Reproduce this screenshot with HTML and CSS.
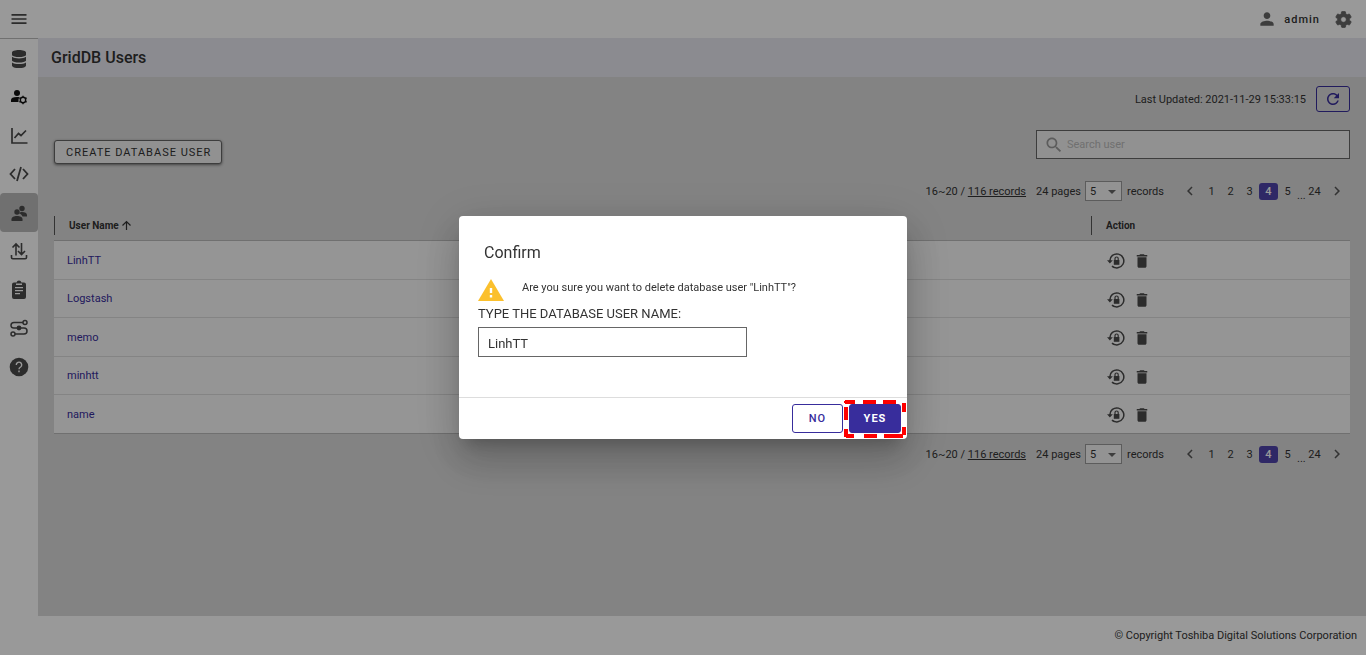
FILE: index.html
```html
<!DOCTYPE html>
<html lang="en">
<head>
    <meta charset="UTF-8">
    <meta name="viewport" content="width=device-width, initial-scale=1.0">
    <title>GridDB Users</title>
    <link rel="stylesheet" href="styles.css">
</head>
<body>
    <!-- Shared icons -->
    <svg class="sprite" aria-hidden="true">
        <symbol id="icon-reset" viewBox="0 0 18 18">
            <path d="M2.8 9A7 7 0 1 1 5 14M5.2 14.2A7 7 0 0 0 7.4 15.6" fill="none" stroke="currentColor" stroke-width="1.5"/>
            <path d="M0 8.2h5.8L2.9 11.4z"/>
            <path d="M6.8 8h5.6v4.8H6.8z"/>
            <path d="M8 8V6.6a1.6 1.6 0 0 1 3.2 0V8" fill="none" stroke="currentColor" stroke-width="1.2"/>
        </symbol>
        <symbol id="icon-trash" viewBox="0 0 24 24">
            <path d="M6 19c0 1.100.9 2 2 2h8c1.100 0 2-.9 2-2V7H6v12zM19 4h-3.500l-1-1h-5l-1 1H5v2h14V4z"/>
        </symbol>
        <symbol id="icon-left" viewBox="0 0 24 24"><path d="M15.410 7.410 14 6l-6 6 6 6 1.410-1.410L10.830 12z"/></symbol>
        <symbol id="icon-right" viewBox="0 0 24 24"><path d="M10 6 8.590 7.410 13.170 12l-4.580 4.590L10 18l6-6z"/></symbol>
    </svg>

    <div class="app">
        <header class="topbar">
            <button class="icon-btn menu-btn" aria-label="Menu">
                <svg width="20" height="20" viewBox="0 0 24 24"><path d="M3 18h18v-2H3v2zm0-5h18v-2H3v2zm0-7v2h18V6H3z"/></svg>
            </button>
            <div class="account">
                <svg width="20" height="20" viewBox="0 0 24 24"><path d="M12 12c2.210 0 4-1.790 4-4s-1.790-4-4-4-4 1.790-4 4 1.790 4 4 4zm0 2c-2.670 0-8 1.340-8 4v2h16v-2c0-2.660-5.330-4-8-4z"/></svg>
                <span class="account-name">admin</span>
                <button class="icon-btn" aria-label="Settings">
                    <svg width="19" height="19" viewBox="0 0 24 24"><path d="M19.430 12.980c.04-.32.07-.64.07-.98s-.03-.66-.07-.98l2.110-1.650c.19-.15.24-.42.12-.64l-2-3.460c-.12-.22-.39-.3-.61-.22l-2.490 1c-.52-.4-1.080-.73-1.690-.98l-.38-2.650C14.460 2.180 14.250 2 14 2h-4c-.25 0-.46.18-.49.42l-.38 2.650c-.61.25-1.170.59-1.690.98l-2.490-1c-.23-.09-.49 0-.61.22l-2 3.460c-.13.22-.07.49.12.64l2.110 1.650c-.04.32-.07.65-.07.98s.03.66.07.98l-2.110 1.650c-.19.15-.24.42-.12.64l2 3.460c.12.22.39.3.61.22l2.490-1c.52.4 1.080.73 1.690.98l.38 2.650c.03.24.24.42.49.42h4c.25 0 .46-.18.49-.42l.38-2.650c.61-.25 1.170-.59 1.690-.98l2.490 1c.23.09.49 0 .61-.22l2-3.460c.12-.22.07-.49-.12-.64l-2.110-1.650zM12 15.500c-1.930 0-3.500-1.570-3.500-3.500s1.570-3.500 3.500-3.500 3.500 1.570 3.500 3.500-1.570 3.500-3.500 3.500z" stroke="currentColor"/></svg>
                </button>
            </div>
        </header>

        <div class="body">
            <nav class="sidebar" aria-label="Main">
                <a href="#" aria-label="Databases">
                    <svg width="18" height="20" viewBox="0 0 18 20"><path d="M2 3.500C2 2 5 1 9 1s7 1 7 2.500v2.700C15 7.300 12.500 8 9 8S3 7.300 2 6.200zM2 7.800c1.500 1.100 4 1.600 7 1.600s5.500-.5 7-1.600v4c-1 1.100-3.500 1.800-7 1.800s-6-.7-7-1.800zM2 13.400C3.500 14.500 6 15 9 15s5.500-.5 7-1.600v3C16 18 13 19 9 19s-7-1-7-2.600z"/></svg>
                </a>
                <a href="#" class="strong" aria-label="User settings">
                    <svg width="18" height="18" viewBox="0 0 18 18"><circle cx="7" cy="5" r="3"/><path d="M1 14v-2c0-2 2-3 6-3 1 0 1.800.1 2.500.3A5 5 0 0 0 8.500 14z"/><circle cx="13" cy="12" r="2.700" fill="none" stroke="currentColor" stroke-width="1.400"/><path d="M13 7.800v8.400M9.400 9.900l7.200 4.200M9.400 14.100l7.200-4.200" fill="none" stroke="currentColor" stroke-width="1.300" stroke-dasharray="1.500 5.400"/></svg>
                </a>
                <a href="#" aria-label="Metrics">
                    <svg width="18" height="18" viewBox="0 0 18 18"><path d="M2 1v15h15.500M4.500 11l4-4.500 2.500 2L16 3.500" fill="none" stroke="currentColor" stroke-width="1.700"/></svg>
                </a>
                <a href="#" aria-label="Query">
                    <svg width="20" height="18" viewBox="0 0 20 18"><path d="M6 4 1.500 9 6 14M14 4l4.500 5-4.500 5M12 2 8 16" fill="none" stroke="currentColor" stroke-width="1.800"/></svg>
                </a>
                <a href="#" class="active" aria-label="GridDB Users" aria-current="page">
                    <svg width="18" height="18" viewBox="0 0 18 18"><circle cx="12" cy="4.500" r="2.700"/><path d="M9 9.200c1-1 2-1.200 3-1.200 3 0 5 1.200 5 3v1.500h-4.500C12 10.800 10.500 9.800 9 9.200z"/><circle cx="7" cy="8" r="2.700"/><path d="M1.500 17v-1.800C1.500 13 4 12 7 12s5.500 1 5.500 3.200V17z"/></svg>
                </a>
                <a href="#" aria-label="Import and export">
                    <svg width="18" height="18" viewBox="0 0 18 18"><path d="M1.500 13v2.500q0 1.300 1.300 1.300h12.400q1.300 0 1.300-1.300V13M6 13.500V2M2.500 5.500 6 2l3.500 3.500M11.500 1v11.500M8 9l3.500 3.500L15 9" fill="none" stroke="currentColor" stroke-width="1.600"/></svg>
                </a>
                <a href="#" aria-label="Logs">
                    <svg width="18" height="20" viewBox="0 0 18 20"><path fill-rule="evenodd" d="M4 2.500h2.500a2.600 2.600 0 0 1 5 0H14q2 0 2 2V17q0 2-2 2H4q-2 0-2-2V4.500q0-2 2-2zM5 7v1.300h8V7zm0 3v1.300h8V10zm0 3v1.300h5V13zM6 3.500V5h6V3.500z"/></svg>
                </a>
                <a href="#" aria-label="Jobs">
                    <svg width="18" height="18" viewBox="0 0 18 18"><g fill="none" stroke="currentColor" stroke-width="1.500"><circle cx="15" cy="3.500" r="2"/><circle cx="3" cy="15" r="2"/><path d="M13 3.500H4q-3 0-3 2.800T4 9h10q3 0 3 3t-3 3H5"/></g><circle cx="9" cy="9" r="2.400"/></svg>
                </a>
                <a href="#" aria-label="Help">
                    <svg width="20" height="20" viewBox="0 0 20 20"><circle cx="10" cy="10" r="9.300"/><path d="M7.300 8a2.700 2.700 0 1 1 4.300 2Q10 11 10 12.300M10 13.600v1.700" fill="none" stroke="#fff" stroke-width="1.400"/></svg>
                </a>
            </nav>

            <main class="main">
                <h1 class="page-title">GridDB Users</h1>

                <div class="content">
                    <div class="updated">
                        <span>Last Updated: 2021-11-29 15:33:15</span>
                        <button class="refresh" aria-label="Refresh">
                            <svg width="18" height="18" viewBox="0 0 24 24"><path d="M17.650 6.350C16.200 4.900 14.210 4 12 4c-4.420 0-7.990 3.580-7.990 8s3.570 8 7.990 8c3.730 0 6.840-2.550 7.730-6h-2.080c-.82 2.330-3.040 4-5.650 4-3.310 0-6-2.690-6-6s2.690-6 6-6c1.660 0 3.140.69 4.220 1.780L13 11h7V4l-2.350 2.350z"/></svg>
                        </button>
                    </div>

                    <div class="toolbar">
                        <button class="create">CREATE DATABASE USER</button>
                        <label class="search">
                            <svg width="20" height="20" viewBox="0 0 24 24"><path d="M15.500 14h-.79l-.28-.27C15.410 12.590 16 11.110 16 9.500 16 5.910 13.090 3 9.500 3S3 5.910 3 9.500 5.910 16 9.500 16c1.610 0 3.090-.59 4.230-1.570l.27.28v.79l5 4.990L20.490 19l-4.990-5zm-6 0C7.010 14 5 11.990 5 9.500S7.010 5 9.500 5 14 7.010 14 9.500 11.990 14 9.500 14z"/></svg>
                            <input type="text" placeholder="Search user" aria-label="Search user">
                        </label>
                    </div>

                    <div class="pager">
                        <span>16~20 / <u>116 records</u></span>
                        <span class="pages">24 pages</span>
                        <select aria-label="Records per page"><option>5</option></select>
                        <span>records</span>
                        <div class="page-list">
                            <button class="arrow" aria-label="Previous page"><svg width="18" height="18"><use href="#icon-left"/></svg></button>
                            <button>1</button>
                            <button>2</button>
                            <button>3</button>
                            <button class="current">4</button>
                            <button>5</button>
                            <span class="dots">...</span>
                            <button>24</button>
                            <button class="arrow" aria-label="Next page"><svg width="18" height="18"><use href="#icon-right"/></svg></button>
                        </div>
                    </div>

                    <table class="users">
                        <thead>
                            <tr>
                                <th><span class="th-label">User Name <svg width="11" height="11" viewBox="0 0 11 11"><path d="M5.500 10V1.500M1.500 5.500l4-4 4 4" fill="none" stroke="currentColor" stroke-width="1.200"/></svg></span></th>
                                <th class="action"><span class="th-label">Action</span></th>
                            </tr>
                        </thead>
                        <tbody>
                            <tr>
                                <td><a href="#">LinhTT</a></td>
                                <td><div class="actions"><button class="icon-btn" aria-label="Reset password"><svg width="18" height="18"><use href="#icon-reset"/></svg></button><button class="icon-btn" aria-label="Delete"><svg width="18" height="18"><use href="#icon-trash"/></svg></button></div></td>
                            </tr>
                            <tr>
                                <td><a href="#">Logstash</a></td>
                                <td><div class="actions"><button class="icon-btn" aria-label="Reset password"><svg width="18" height="18"><use href="#icon-reset"/></svg></button><button class="icon-btn" aria-label="Delete"><svg width="18" height="18"><use href="#icon-trash"/></svg></button></div></td>
                            </tr>
                            <tr>
                                <td><a href="#">memo</a></td>
                                <td><div class="actions"><button class="icon-btn" aria-label="Reset password"><svg width="18" height="18"><use href="#icon-reset"/></svg></button><button class="icon-btn" aria-label="Delete"><svg width="18" height="18"><use href="#icon-trash"/></svg></button></div></td>
                            </tr>
                            <tr>
                                <td><a href="#">minhtt</a></td>
                                <td><div class="actions"><button class="icon-btn" aria-label="Reset password"><svg width="18" height="18"><use href="#icon-reset"/></svg></button><button class="icon-btn" aria-label="Delete"><svg width="18" height="18"><use href="#icon-trash"/></svg></button></div></td>
                            </tr>
                            <tr>
                                <td><a href="#">name</a></td>
                                <td><div class="actions"><button class="icon-btn" aria-label="Reset password"><svg width="18" height="18"><use href="#icon-reset"/></svg></button><button class="icon-btn" aria-label="Delete"><svg width="18" height="18"><use href="#icon-trash"/></svg></button></div></td>
                            </tr>
                        </tbody>
                    </table>

                    <div class="pager">
                        <span>16~20 / <u>116 records</u></span>
                        <span class="pages">24 pages</span>
                        <select aria-label="Records per page"><option>5</option></select>
                        <span>records</span>
                        <div class="page-list">
                            <button class="arrow" aria-label="Previous page"><svg width="18" height="18"><use href="#icon-left"/></svg></button>
                            <button>1</button>
                            <button>2</button>
                            <button>3</button>
                            <button class="current">4</button>
                            <button>5</button>
                            <span class="dots">...</span>
                            <button>24</button>
                            <button class="arrow" aria-label="Next page"><svg width="18" height="18"><use href="#icon-right"/></svg></button>
                        </div>
                    </div>
                </div>
            </main>
        </div>

        <footer class="footer">© Copyright Toshiba Digital Solutions Corporation</footer>
    </div>

    <div class="overlay">
        <form class="dialog" role="dialog" aria-modal="true" aria-labelledby="dialogTitle">
            <div class="dialog-body">
                <h2 id="dialogTitle">Confirm</h2>
                <div class="message">
                    <svg width="26" height="22" viewBox="0 0 26 22"><path d="M13 0 26 22H0z" fill="#fbc02d"/><path d="M11.800 9h2.400v5h-2.400zM11.800 16h2.400v2.400h-2.400z" fill="#fff"/></svg>
                    <p>Are you sure you want to delete database user "LinhTT"?</p>
                </div>
                <label for="confirmName">TYPE THE DATABASE USER NAME:</label>
                <input type="text" id="confirmName" value="LinhTT">
            </div>
            <div class="dialog-actions">
                <button type="button" class="btn">NO</button>
                <div class="marked">
                    <button type="button" class="btn btn-primary">YES</button>
                    <svg class="marker" width="62" height="38" viewBox="0 0 62 38" aria-hidden="true"><path d="M1 2h10M19 2h13M39 2h13M60 3v9M60 27v8M59 36h-8M20 36h13M40 36h12M2 36h8M2 7v13M2 29v8M2 1v2" fill="none" stroke="#f00" stroke-width="4"/></svg>
                </div>
            </div>
        </form>
    </div>
</body>
</html>
```
FILE: styles.css
```css
:root {
    --primary-color: #382d9c;
    --text-color: #333;
    --icon-color: #4a4a4a;
    --page-bg: #dbdbdb;
    --font-family: Roboto, "Liberation Sans", sans-serif;
}

* {
    margin: 0;
    padding: 0;
    box-sizing: border-box;
}

body {
    font-family: var(--font-family);
    font-size: 11px;
    color: var(--text-color);
}

button, input, select {
    font-family: inherit;
    font-size: inherit;
    color: inherit;
}

button {
    cursor: pointer;
}

svg {
    display: block;
    flex: none;
    fill: currentColor;
}

a {
    color: var(--primary-color);
    text-decoration: none;
}

.sprite {
    display: none;
}

.app {
    min-height: 100vh;
    display: flex;
    flex-direction: column;
    background: #fff;
}

.icon-btn {
    background: none;
    border: none;
    color: var(--icon-color);
}

/* Top bar */
.topbar {
    height: 38px;
    display: flex;
    justify-content: space-between;
    align-items: center;
    padding: 0 13px 0 9px;
}

.account {
    display: flex;
    align-items: center;
    color: #666;
}

.account .icon-btn {
    color: #666;
}

.account-name {
    margin: 0 14px 0 7px;
    color: var(--text-color);
    font-weight: 500;
    letter-spacing: 1px;
}

/* Sidebar */
.body {
    flex: 1;
    display: flex;
}

.sidebar {
    width: 38px;
    border-top: 1px solid #bbb;
}

.sidebar a {
    height: 38px;
    display: flex;
    justify-content: center;
    align-items: center;
    color: var(--icon-color);
    border-radius: 4px;
}

.sidebar a:nth-child(odd) {
    height: 39px;
}

.sidebar .strong {
    color: #111;
}

.sidebar .active {
    background: #bbb;
}

/* Main */
.main {
    flex: 1;
    background: var(--page-bg);
}

.page-title {
    height: 39px;
    padding-left: 13px;
    background: #e8e8f0;
    font-size: 16px;
    font-weight: 500;
    line-height: 39px;
}

.content {
    padding: 9px 16px 0;
}

.updated {
    display: flex;
    justify-content: flex-end;
    align-items: center;
    gap: 10px;
}

.refresh {
    width: 34px;
    height: 26px;
    display: flex;
    justify-content: center;
    align-items: center;
    background: none;
    border: 1px solid var(--primary-color);
    border-radius: 3px;
    color: var(--primary-color);
}

.toolbar {
    display: flex;
    justify-content: space-between;
    align-items: flex-end;
    margin-top: 18px;
}

.create {
    height: 24px;
    padding: 0 10px 0 11px;
    margin-bottom: -5px;
    background: #f2f2f2;
    border: 1px solid #666;
    border-radius: 3px;
    box-shadow: 0 1px 3px rgba(0, 0, 0, 0.5);
    letter-spacing: 1px;
}

.search {
    width: 314px;
    height: 29px;
    display: flex;
    align-items: center;
    gap: 3px;
    padding-left: 7px;
    background: #f2f2f2;
    border: 1px solid #666;
    color: #999;
}

.search input {
    flex: 1;
    background: none;
    border: none;
    outline: none;
}

.search input::placeholder {
    color: #bbb;
}

/* Pagination */
.pager {
    height: 20px;
    display: flex;
    justify-content: flex-end;
    align-items: center;
    gap: 5px;
    margin-top: 22px;
    padding-right: 4px;
}

.pager .pages {
    margin-left: 5px;
}

.pager select {
    width: 37px;
    height: 20px;
    margin-left: -1px;
    padding-left: 4px;
    appearance: none;
    background: #f5f5f5 linear-gradient(#777, #777) no-repeat 0 0 / 0 0;
    background-image: conic-gradient(from -45deg at 50% 100%, #777 90deg, transparent 0);
    background-image: url("data:image/svg+xml,%3Csvg xmlns='http://www.w3.org/2000/svg' width='8' height='4'%3E%3Cpath d='M0 0h8L4 4z' fill='%23666'/%3E%3C/svg%3E");
    background-position: 22px 8px;
    background-size: 8px 4px;
    border: 1px solid #999;
}

.page-list {
    display: flex;
    align-items: center;
    margin-left: 8px;
}

.page-list button {
    width: 19px;
    height: 17px;
    background: none;
    border: none;
    border-radius: 3px;
}

.page-list .current {
    background: #4f44aa;
    color: #fff;
    font-weight: 500;
}

.page-list .arrow {
    display: flex;
    justify-content: center;
    align-items: center;
    margin: 0 3px;
    color: #555;
}

.page-list .arrow:last-child {
    margin-right: 0;
}

.dots {
    width: 8px;
    padding-top: 8px;
    text-align: center;
}

/* Table */
.users {
    width: 100%;
    margin-top: 15px;
    border-collapse: separate;
    border-spacing: 0;
}

.users th {
    padding-bottom: 5px;
    border-bottom: 1px solid #bbb;
    font-size: 10px;
    font-weight: 700;
    text-align: left;
}

.users .action {
    width: 259px;
}

.th-label {
    height: 19px;
    display: flex;
    align-items: center;
    gap: 2px;
    padding-left: 14px;
    border-left: 1px solid #555;
}

.users td {
    height: 38px;
    padding-left: 13px;
    background: #f9f9f9;
    border-bottom: 1px solid #ddd;
}

.users tr:nth-child(odd) td {
    height: 39px;
}

.users tbody tr:last-child td {
    border-bottom-color: #bbb;
}

.actions {
    display: flex;
    gap: 8px;
    padding: 2px 0 0 3px;
}

.users + .pager {
    margin-top: 10px;
}

.footer {
    height: 39px;
    padding-right: 9px;
    line-height: 39px;
    text-align: right;
}

/* Confirm dialog */
.overlay {
    position: fixed;
    inset: 0;
    display: flex;
    justify-content: center;
    align-items: center;
    background: rgba(0, 0, 0, 0.4);
}

.dialog {
    width: 448px;
    background: #fff;
    border-radius: 4px;
    box-shadow: 0 11px 15px -7px rgba(0, 0, 0, 0.2), 0 24px 38px 3px rgba(0, 0, 0, 0.14), 0 9px 46px 8px rgba(0, 0, 0, 0.12);
}

.dialog-body {
    padding: 27px 19px 40px;
    border-bottom: 1px solid #ddd;
}

.dialog h2 {
    padding-left: 6px;
    font-size: 16px;
    font-weight: 400;
    line-height: 20px;
}

.message {
    display: flex;
    gap: 18px;
    margin-top: 16px;
}

.message p {
    line-height: 18px;
}

.dialog label {
    display: block;
    margin: 5px 0 6px;
    font-size: 13px;
    line-height: 15px;
}

.dialog input {
    width: 269px;
    height: 30px;
    display: block;
    padding: 2px 9px 0;
    border: 1px solid #666;
    font-size: 13px;
}

.dialog-actions {
    display: flex;
    justify-content: flex-end;
    gap: 6px;
    padding: 6px;
}

.btn {
    min-width: 51px;
    height: 29px;
    background: #fff;
    border: 1px solid var(--primary-color);
    border-radius: 3px;
    color: var(--primary-color);
    font-weight: 500;
    letter-spacing: 1px;
}

.btn-primary {
    min-width: 52px;
    display: block;
    background: var(--primary-color);
    color: #fff;
    font-weight: 700;
}

.marked {
    position: relative;
}

.marker {
    position: absolute;
    top: -4px;
    left: -5px;
    pointer-events: none;
}
```
